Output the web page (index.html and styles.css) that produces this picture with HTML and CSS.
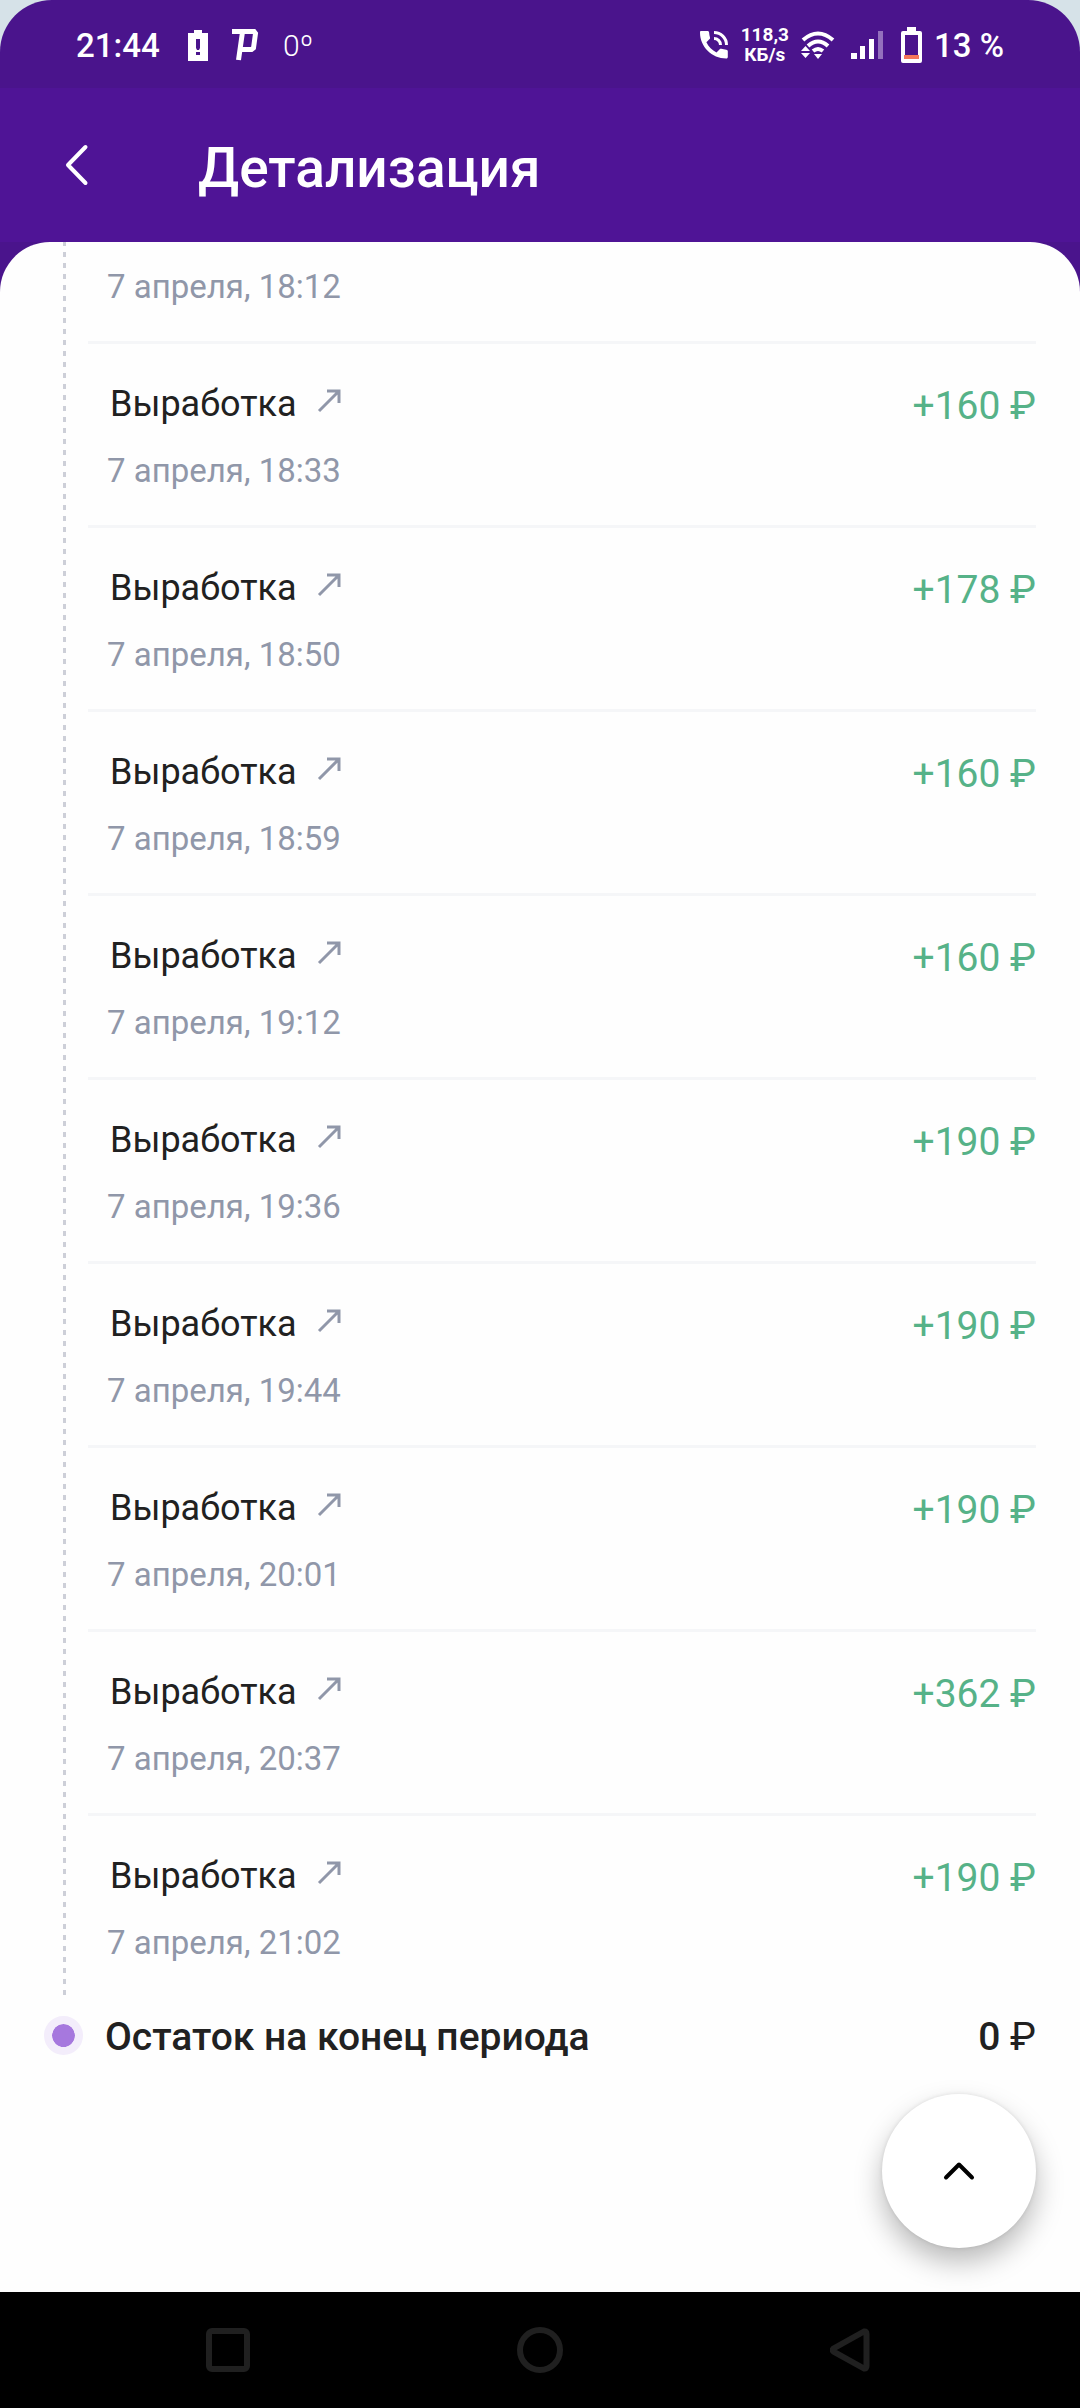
FILE: index.html
```html
<!DOCTYPE html>
<html lang="ru">
<head>
<meta charset="utf-8">
<meta name="viewport" content="width=device-width, initial-scale=1">
<title>Детализация</title>
<link rel="stylesheet" href="styles.css">
</head>
<body>
<div class="statusbar">
  <span class="clock">21:44</span>
  <svg class="status-alert" width="20" height="31" viewBox="0 0 20 31"><path fill="#fff" fill-rule="evenodd" d="M6 0h8v3h6v28H0V3h6zM8 9v9l1 2h2l1-2V9zM8 22v3h4v-3z"/></svg>
  <svg class="status-p" width="27" height="32" viewBox="0 0 27 32"><path fill="none" stroke="#fff" stroke-width="5" d="M0 2.500H22L23.500 4.500L21.500 19L19.500 20.500H8M10.500 3L6.500 31"/></svg>
  <span class="degree">0º</span>
  <span class="spacer"></span>
  <svg width="29" height="28" viewBox="0 0 29 28"><path fill="#fff" d="M1 0h6.500c1 0 1.500.6 1.600 1.500.1 1.700.4 3.300.9 4.900.2.600.1 1.200-.4 1.700L6.400 11.300c2.200 4.400 5.700 7.900 10.100 10.100l3.200-3.200c.5-.5 1-.6 1.700-.4 1.500.5 3.200.8 4.900.9.900.1 1.500.7 1.500 1.600v5.700c0 .900-.6 1.500-1.500 1.500C11.800 27.500 0 15.700 0 1.500 0 .6.200 0 1 0z"/><path fill="none" stroke="#fff" stroke-width="3" d="M14 1.500A12.500 12.500 0 0 1 26.500 14M14 7.500A6.500 6.500 0 0 1 20.500 14"/></svg>
  <span class="speed">118,3<br>КБ/s</span>
  <svg width="34" height="29" viewBox="0 0 34 29"><g fill="none" stroke="#fff" stroke-width="4"><path d="M2 9Q17-4 32 9M7 15Q17 6 27 15M12 20Q17 16 22 20"/></g><path fill="#fff" d="M13 23h8l-4 5zM0 20l4.500-5L9 20zM0 22h9l-4.500 5z"/></svg>
  <svg class="status-signal" width="32" height="28" viewBox="0 0 32 28"><path fill="#fff" d="M0 22h6v6H0zM9 15h5v13H9zM18 8h5v20h-5z"/><path fill="#9470bd" d="M27 0h5v28h-5z"/></svg>
  <svg class="status-battery" width="21" height="36" viewBox="0 0 21 36"><path fill="#fff" fill-rule="evenodd" d="M6 0h9v4h4q2 0 2 2v28q0 2-2 2H2q-2 0-2-2V6q0-2 2-2h4zM4 8v24h13V8z"/><path fill="#f4775a" d="M3 28h15v4H3z"/></svg>
  <span class="charge">13 %</span>
</div>
<header class="topbar">
  <button class="back" type="button" aria-label="Назад"><svg width="24" height="44" viewBox="0 0 24 44"><path fill="none" stroke="#fff" stroke-width="4" stroke-linecap="round" stroke-linejoin="round" d="M20.500 4L3 22L20.500 40"/></svg></button>
  <h1 class="title">Детализация</h1>
</header>
<main class="backdrop">
  <div class="sheet">
    <ol class="entries">
      <li class="entry entry-cut"><time class="date">7 апреля, 18:12</time></li>
      <li class="entry"><a class="kind" href="#">Выработка <svg class="arrow" viewBox="0 0 24 24"><path d="M2 22L22 2M10 2H22V14"/></svg></a><span class="sum">+160 ₽</span><time class="date">7 апреля, 18:33</time></li>
      <li class="entry"><a class="kind" href="#">Выработка <svg class="arrow" viewBox="0 0 24 24"><path d="M2 22L22 2M10 2H22V14"/></svg></a><span class="sum">+178 ₽</span><time class="date">7 апреля, 18:50</time></li>
      <li class="entry"><a class="kind" href="#">Выработка <svg class="arrow" viewBox="0 0 24 24"><path d="M2 22L22 2M10 2H22V14"/></svg></a><span class="sum">+160 ₽</span><time class="date">7 апреля, 18:59</time></li>
      <li class="entry"><a class="kind" href="#">Выработка <svg class="arrow" viewBox="0 0 24 24"><path d="M2 22L22 2M10 2H22V14"/></svg></a><span class="sum">+160 ₽</span><time class="date">7 апреля, 19:12</time></li>
      <li class="entry"><a class="kind" href="#">Выработка <svg class="arrow" viewBox="0 0 24 24"><path d="M2 22L22 2M10 2H22V14"/></svg></a><span class="sum">+190 ₽</span><time class="date">7 апреля, 19:36</time></li>
      <li class="entry"><a class="kind" href="#">Выработка <svg class="arrow" viewBox="0 0 24 24"><path d="M2 22L22 2M10 2H22V14"/></svg></a><span class="sum">+190 ₽</span><time class="date">7 апреля, 19:44</time></li>
      <li class="entry"><a class="kind" href="#">Выработка <svg class="arrow" viewBox="0 0 24 24"><path d="M2 22L22 2M10 2H22V14"/></svg></a><span class="sum">+190 ₽</span><time class="date">7 апреля, 20:01</time></li>
      <li class="entry"><a class="kind" href="#">Выработка <svg class="arrow" viewBox="0 0 24 24"><path d="M2 22L22 2M10 2H22V14"/></svg></a><span class="sum">+362 ₽</span><time class="date">7 апреля, 20:37</time></li>
      <li class="entry"><a class="kind" href="#">Выработка <svg class="arrow" viewBox="0 0 24 24"><path d="M2 22L22 2M10 2H22V14"/></svg></a><span class="sum">+190 ₽</span><time class="date">7 апреля, 21:02</time></li>
    </ol>
    <div class="total">
      <span class="dot"></span>
      <span class="total-label">Остаток на конец периода</span>
      <span class="total-sum">0 <span class="currency">₽</span></span>
    </div>
    <button class="to-top" type="button" aria-label="Наверх"><svg width="32" height="20" viewBox="0 0 32 20"><path fill="none" stroke="#000" stroke-width="4" stroke-linecap="round" stroke-linejoin="round" d="M3 16.500L16 3.500L29 16.500"/></svg></button>
  </div>
</main>
<nav class="navbar">
  <button type="button" aria-label="Недавние"><svg width="44" height="44" viewBox="0 0 44 44"><rect x="3" y="3" width="38" height="38" rx="3"/></svg></button>
  <button type="button" aria-label="Домой"><svg width="46" height="46" viewBox="0 0 46 46"><circle cx="23" cy="23" r="20"/></svg></button>
  <button type="button" aria-label="Назад"><svg width="40" height="44" viewBox="0 0 40 44"><path d="M3.500 20.500L34 3.500Q36.500 3 36.500 6V38Q36.500 41 34 40.500L3.500 23.500Q2 22 3.500 20.500z"/></svg></button>
</nav>
</body>
</html>
```
FILE: styles.css
```css
* {
  box-sizing: border-box;
}

body {
  margin: 0;
  min-height: 100vh;
  display: flex;
  flex-direction: column;
  background: #d6e2e8;
  color: #212121;
  font-family: Roboto, sans-serif;
}

button {
  display: flex;
  align-items: center;
  justify-content: center;
  padding: 0;
  border: 0;
  background: none;
}

svg {
  display: block;
  flex: none;
}

.statusbar {
  display: flex;
  align-items: center;
  height: 88px;
  padding: 2px 76px 0;
  border-radius: 52px 52px 0 0;
  background: #4a148c;
  color: #fff;
  font-size: 33px;
  font-weight: 500;
}

.clock {
  width: 112px;
}

.status-alert {
  margin-right: 24px;
}

.status-p {
  margin-right: 24px;
}

.degree {
  font-size: 30px;
  font-weight: 300;
}

.spacer {
  flex: 1;
}

.speed {
  margin: 0 12px;
  font-size: 19px;
  font-weight: 700;
  line-height: 20px;
  text-align: center;
}

.status-signal {
  margin: 0 18px 0 16px;
}

.status-battery {
  margin-right: 12px;
}

.topbar {
  display: flex;
  align-items: center;
  height: 154px;
  padding: 0 64px;
  background: #4f1496;
}

.back {
  width: 26px;
  height: 64px;
}

.title {
  margin: 6px 0 0 108px;
  color: #fff;
  font-size: 55px;
  font-weight: 500;
  line-height: 64px;
}

.backdrop {
  flex: 1;
  display: flex;
  background: #4a148c;
}

.sheet {
  position: relative;
  flex: 1;
  border-radius: 50px 50px 0 0;
  background: #fefefe;
}

.entries {
  margin: 0;
  padding: 0 44px 0 88px;
  list-style: none;
  background: repeating-linear-gradient(#cdcfd8 0 4px, transparent 4px 10px, #cdcfd8 10px 11px) 63px 0 / 3px 100% no-repeat;
}

.entry {
  display: grid;
  grid-template-columns: 1fr auto;
  align-content: start;
  row-gap: 17px;
  height: 184px;
  padding: 36px 0 0 19px;
  border-top: 3px solid #f5f6f8;
}

.entry-cut {
  height: 99px;
  padding-top: 23px;
  border-top: 0;
}

.kind {
  display: flex;
  gap: 20px;
  padding-left: 3px;
  color: #212121;
  font-size: 36px;
  line-height: 48px;
  text-decoration: none;
}

.arrow {
  width: 24px;
  height: 24px;
  margin-top: 9px;
  fill: none;
  stroke: #9097a9;
  stroke-width: 3;
}

.sum {
  color: #56b288;
  font-size: 39px;
  line-height: 52px;
}

.date {
  color: #9097a9;
  font-size: 33px;
  line-height: 44px;
}

.total {
  display: flex;
  align-items: center;
  height: 80px;
  padding: 0 44px;
  font-size: 39px;
  font-weight: 500;
}

.dot {
  width: 39px;
  height: 39px;
  margin: 0 22px 4px 0;
  border: 8px solid #f3edfb;
  border-radius: 50%;
  background: #a678de;
  background-clip: padding-box;
}

.total-label {
  flex: 1;
}

.currency {
  font-weight: 400;
}

.to-top {
  position: absolute;
  right: 44px;
  bottom: 44px;
  width: 154px;
  height: 154px;
  border-radius: 50%;
  background: #fff;
  box-shadow: 0 14px 28px rgba(0, 0, 0, .27), 0 0 4px rgba(0, 0, 0, .1);
}

.navbar {
  position: relative;
  display: flex;
  align-items: center;
  justify-content: space-between;
  height: 116px;
  padding: 0 210px 0 206px;
  background: #000;
}

.navbar svg {
  fill: none;
  stroke: #202020;
  stroke-width: 6;
}
```
